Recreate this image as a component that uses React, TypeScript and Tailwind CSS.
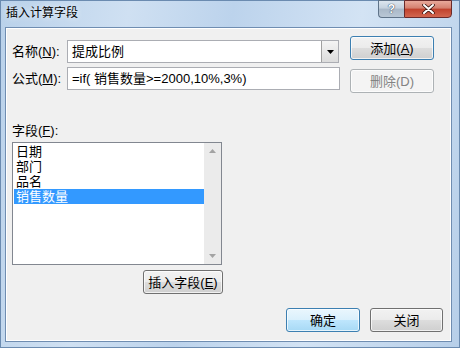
import React from 'react';

const FONT = '"Liberation Sans", "Noto Sans CJK SC", sans-serif';

function WinButton({ children, w, kind = 'normal' }: { children: React.ReactNode; w: string; kind?: 'normal' | 'default' | 'focus' | 'disabled' }) {
  const base = 'h-[24px] rounded-[3px] border flex items-center justify-center text-[13px] leading-none shadow-[inset_0_0_0_1px_rgba(255,255,255,0.7)]';
  const styles = {
    normal: 'border-[#707070] bg-[linear-gradient(#f2f2f2_0%,#ebebeb_50%,#dddddd_51%,#cfcfcf_100%)] text-black',
    default: 'border-[#3c7fb1] bg-[linear-gradient(#eaf6fd_0%,#d9f0fc_50%,#bee6fd_51%,#a7d9f5_100%)] text-black',
    focus: 'border-[#3c7fb1] bg-[linear-gradient(#f2f2f2_0%,#ebebeb_50%,#dddddd_51%,#cfcfcf_100%)] text-black shadow-[inset_0_0_0_1px_#bfe4f7]',
    disabled: 'border-[#adb2b5] bg-[#f4f4f4] text-[#838383]',
  }[kind];
  return <div className={`${base} ${styles} ${w}`}>{children}</div>;
}

export default function App() {
  const items = ['日期', '部门', '品名', '销售数量'];

  return (
    <div
      className="w-[460px] h-[348px] flex flex-col bg-[linear-gradient(100deg,#b9d1ea_0%,#cfe0f2_25%,#bcd3ec_45%,#d3e3f4_70%,#b7cfe9_100%)] border border-[#6b8bb0]"
      style={{ fontFamily: FONT }}
    >
      {/* title bar */}
      <div className="h-[26px] flex items-start justify-between">
        <div className="pl-[5px] pt-[5px] text-[12px] leading-[14px] text-black [text-shadow:0_0_6px_#ffffff]">插入计算字段</div>
        <div className="flex mr-[7px] -mt-px">
          <div className="w-[26px] h-[18px] rounded-bl-[4px] border border-[#5f7389] border-r-0 bg-[linear-gradient(#dde6ef_0%,#c4d1de_45%,#a9b8c8_50%,#b9c7d6_100%)] flex items-center justify-center">
            <span className="text-[12px] font-bold text-white leading-none [text-shadow:0_0_1px_#2f3f52,0_0_1px_#2f3f52]">?</span>
          </div>
          <div className="w-[48px] h-[18px] rounded-br-[4px] border border-[#6a2a2a] bg-[linear-gradient(#e9a99b_0%,#d47f6e_45%,#c0412c_50%,#d2664f_100%)] flex items-center justify-center">
            <svg width="13" height="10" viewBox="0 0 13 10">
              <path d="M2 1 L11 9 M11 1 L2 9" stroke="#3b1410" strokeWidth="3.6" strokeLinecap="round" />
              <path d="M2 1 L11 9 M11 1 L2 9" stroke="#ffffff" strokeWidth="2" strokeLinecap="round" />
            </svg>
          </div>
        </div>
      </div>

      {/* client area */}
      <div className="ml-[4px] mr-[7px] h-[315px] border border-[#6f8db1] bg-[#f0f0f0] shadow-[inset_0_0_0_1px_#ffffff] text-black text-[13px]">
        <div className="flex">
          <div className="pt-[12px] pl-[6px] flex flex-col gap-[4px]">
            <div className="flex items-center h-[23px]">
              <div className="w-[55px]">名称(<span className="underline">N</span>):</div>
              <div className="w-[272px] h-[23px] border border-[#abadb3] bg-white flex items-center">
                <div className="flex-1 pl-[4px]">提成比例</div>
                <div className="w-[17px] h-[21px] border-l border-[#a0a0a0] bg-[linear-gradient(#f4f4f4,#dcdcdc)] flex items-center justify-center">
                  <svg width="7" height="4" viewBox="0 0 7 4"><path d="M0 0 H7 L3.5 4 Z" fill="#000" /></svg>
                </div>
              </div>
            </div>
            <div className="flex items-center h-[23px]">
              <div className="w-[55px]">公式(<span className="underline">M</span>):</div>
              <div className="w-[273px] h-[23px] border border-[#abadb3] bg-white flex items-center pl-[4px] whitespace-nowrap">
                =if( 销售数量&gt;=2000,10%,3%)
              </div>
            </div>
          </div>
          <div className="pt-[8px] ml-[10px] flex flex-col gap-[9px]">
            <WinButton w="w-[84px]" kind="focus">添加(<span className="underline">A</span>)</WinButton>
            <WinButton w="w-[84px]" kind="disabled">删除(D)</WinButton>
          </div>
        </div>

        <div className="pl-[6px] mt-[31px] leading-[14px]">字段(<span className="underline">F</span>):</div>

        <div className="ml-[6px] mt-[4px] w-[210px] h-[123px] border border-[#828790] bg-white flex">
          <div className="flex-1 pt-[1px] pl-px">
            {items.map((t, i) => (
              <div
                key={t}
                className={`h-[15px] leading-[15px] pl-[2px] text-[13px] ${i === 3 ? 'bg-[#3399ff] text-white' : ''}`}
              >
                {t}
              </div>
            ))}
          </div>
          <div className="w-[17px] bg-[#ebebeb] flex flex-col justify-between items-center py-[6px]">
            <svg width="7" height="4" viewBox="0 0 7 4"><path d="M0 4 H7 L3.5 0 Z" fill="#a3a3a3" /></svg>
            <svg width="7" height="4" viewBox="0 0 7 4"><path d="M0 0 H7 L3.5 4 Z" fill="#a3a3a3" /></svg>
          </div>
        </div>

        <div className="ml-[137px] mt-[5px]">
          <WinButton w="w-[80px]">插入字段(<span className="underline">E</span>)</WinButton>
        </div>

        <div className="flex justify-end gap-[10px] pr-[8px] mt-[14px]">
          <WinButton w="w-[74px]" kind="default">确定</WinButton>
          <WinButton w="w-[73px]">关闭</WinButton>
        </div>
      </div>
    </div>
  );
}
